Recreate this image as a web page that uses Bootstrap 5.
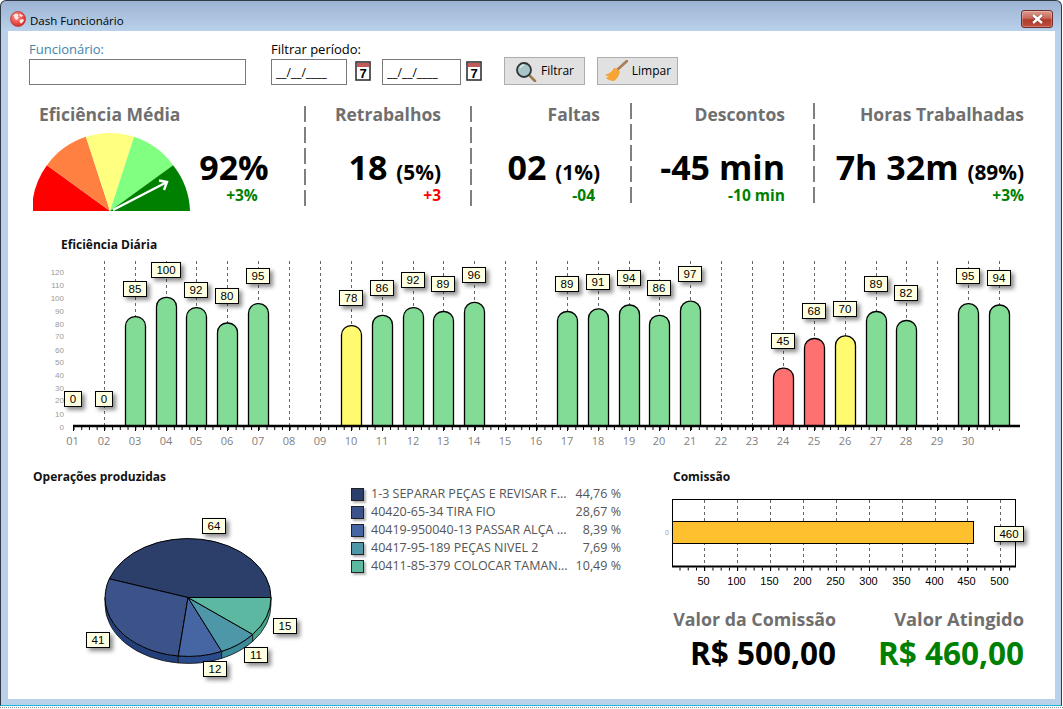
<!DOCTYPE html>
<html lang="pt-BR">
<head>
<meta charset="utf-8">
<title>Dash Funcionário</title>
<link rel="stylesheet" href="https://cdn.jsdelivr.net/npm/bootstrap@5.3.0/dist/css/bootstrap.min.css">
<style>
html,body{margin:0;height:709px;overflow:hidden;background:#fff;font-family:"Open Sans","Noto Sans",sans-serif;color:#000}
.janela{width:1062px;height:706px;border:1px solid #2f3a46;border-bottom-color:#19b6d6;border-radius:6px 6px 0 0;background:linear-gradient(#9cb4d2 0,#b9d1ea 30px);overflow:hidden}
.pontilhado{height:2px;margin-top:1px;border-top:1px dotted #8a8a8a}
.barra-titulo{height:30px;padding:9px 0 0 9px;font-size:11.5px}
.globo{width:16px;height:16px;margin-right:4px;margin-top:-3px}
.fechar{width:32px;height:18px;margin-right:8px;margin-top:-3px;border:1px solid #6f2f2a;border-radius:3px;background:linear-gradient(#dc9c90 0,#c8685a 45%,#ae3a2a 55%,#c05040 100%);box-shadow:inset 0 0 0 1px rgba(255,255,255,.25)}
.cliente{width:1047px;height:668px;margin-left:7px;background:#fff;overflow:hidden}
.filtros{height:69px;padding-left:21px}
.rotulo{font-size:13px;line-height:18px;padding-top:9px;height:27px}
.rotulo-azul{color:#3e83ad}
.campo.form-control{display:block;height:26px;margin-top:1px;padding:0 4px;border:1px solid #7a7a7a;border-radius:0;font-size:12px;line-height:24px;color:#000;box-shadow:none}
.campo-nome{width:217px}
.campo-data1{width:76px}
.campo-data2{width:79px;margin-left:11px}
.grupo-data{margin-left:25px}
.cal{width:16px;height:20px;margin-top:3px;margin-left:8px;flex:none}
.cal2{margin-left:5px}
.btn.botao{width:81px;height:28px;margin-top:26px;padding:0;border:1px solid #adadad;border-radius:0;background:#e1e1e1;font-size:12px;color:#000}
.botao-filtrar{margin-left:22px}
.botao-limpar{margin-left:12px}
.kpis{height:110px}
.celula{text-align:right}
.tit-kpi{font-size:17.5px;font-weight:700;line-height:28px;color:#6f6f6f;white-space:nowrap}
.val-kpi{font-size:34px;font-weight:700;line-height:40px;height:40px;margin-top:19px;white-space:nowrap}
.val-kpi small{font-size:20.800px;font-weight:700}
.delta{font-size:15.500px;font-weight:700;line-height:16px}
.recuo{padding-right:5px}
.verde{color:#008000}
.vermelho{color:#f00}
.divisor{width:2px;height:100px;flex:none;background:repeating-linear-gradient(#7f7f7f 0 16px,transparent 16px 21px)}
.div-baixo{margin-top:6px}
.div-alto{margin-top:3px}
.c1{width:296px}.c2{width:164px;padding-right:29px}.c3{width:158px;padding-right:30px}.c4{width:181px;padding-right:28px}.c5{width:240px;padding-right:31px}
.tit-ef{padding-left:31px;text-align:left}
.medidor{width:158px;height:81px;margin:3px 0 0 25px;display:block;flex:none}
.box-92{margin-left:8px;width:70px;text-align:center;margin-top:19px}
.box-92 .val-kpi{margin-top:0}
.box-92 .delta{padding-left:16px}
.secao{font-size:12px;font-weight:700;line-height:18px;color:#111;white-space:nowrap}
.diaria{margin-top:26px}
.diaria .secao{padding-left:53px}
.svg-dia{display:block;width:1047px;height:200px}
.inferior{margin-top:14px}
.col-pizza{width:335px}
.col-pizza .secao{padding-left:25px}
.svg-pizza{display:block;width:335px;height:204px}
.legenda{width:270px;margin-left:8px;padding-top:17px;flex:none}
.leg-linha{height:18px;font-size:12.500px;line-height:18px;color:#555}
.amostra{width:13px;height:13px;margin-right:7px;border:1px solid #222;box-shadow:2px 2px 2px rgba(0,0,0,.3);flex:none}
.leg-nome{white-space:nowrap;overflow:hidden}
.col-com{width:395px;margin-left:39px}
.col-com .secao{padding-left:13px}
.svg-com{display:block;width:395px;height:106px}
.stat{margin-top:13px;text-align:right}
.s1{width:176px}.s2{width:188px}
.tit-stat{font-size:18px;font-weight:700;line-height:28px;color:#6f6f6f;white-space:nowrap}
.s1 .tit-stat{font-size:17.800px}
.s2 .tit-stat{font-size:18.300px}
.val-stat{font-size:31.500px;font-weight:700;line-height:40px;white-space:nowrap}
svg text{font-family:"Liberation Sans",Arial,sans-serif}
.cx{fill:#ffffe1;stroke:#000;stroke-width:1;filter:drop-shadow(3px 3px 2px rgba(0,0,0,.45))}
.et text{font-size:11.5px;text-anchor:middle;fill:#000}
.ey{font-size:8px;fill:#9a9a9a;text-anchor:end}
.ex text{font-family:"Open Sans",sans-serif;font-size:11px;fill:#7f7f7f;text-anchor:middle}
.barras rect{stroke:#000;stroke-width:1.3}
.g{fill:#82dc96}.a{fill:#fffa6e}.r{fill:#ff7070}
.fatia path{stroke:#000;stroke-width:1;stroke-linejoin:round}
.lado path{stroke:#111;stroke-width:.8}
.ec text{font-size:11px;fill:#000;text-anchor:middle}
</style>
</head>
<body>
<div class="janela">
  <div class="barra-titulo d-flex align-items-center">
    <svg class="globo" viewBox="0 0 16 16"><defs><radialGradient id="gg" cx=".4" cy=".35" r=".7"><stop offset="0" stop-color="#ff9a90"/><stop offset="1" stop-color="#d81e1e"/></radialGradient></defs><circle cx="8" cy="8" r="7.6" fill="url(#gg)" stroke="#b93030" stroke-width=".6"/><path d="M3 4.5l3-2 2.5 1-1 2 1.5 1-2 2.5-2-1-.5-2zM9.5 2.5l3.5 2-1.5 1.5-2-1zM9.5 9l3.5-1 1 1.5-2.5 3-1.5-.5z" fill="#ffe9e5"/></svg>
    <span class="flex-grow-1">Dash Funcionário</span>
    <div class="fechar d-flex align-items-center justify-content-center"><svg width="13" height="10" viewBox="0 0 13 10"><path d="M1.5 1l10 8M11.500 1l-10 8" stroke="#5a1e18" stroke-width="3.600" opacity=".45"/><path d="M2 1l9 8M11 1l-9 8" stroke="#fff" stroke-width="2.400"/></svg></div>
  </div>
  <div class="cliente">
    <div class="filtros d-flex">
      <div>
        <div class="rotulo rotulo-azul">Funcionário:</div>
        <input class="form-control campo campo-nome" type="text" aria-label="Funcionário">
      </div>
      <div class="grupo-data">
        <div class="rotulo">Filtrar período:</div>
        <div class="d-flex">
          <input class="form-control campo campo-data1" type="text" value="__/__/____" aria-label="Data inicial">
          <svg class="cal" viewBox="0 0 16 20"><rect x="1" y="1" width="14" height="18" fill="#fff" stroke="#333" stroke-width="1.6"/><rect x="2" y="2" width="12" height="4" fill="#c25a5a"/><text x="8" y="17" font-size="13" font-weight="700" text-anchor="middle">7</text></svg>
          <input class="form-control campo campo-data2" type="text" value="__/__/____" aria-label="Data final">
          <svg class="cal cal2" viewBox="0 0 16 20"><rect x="1" y="1" width="14" height="18" fill="#fff" stroke="#333" stroke-width="1.6"/><rect x="2" y="2" width="12" height="4" fill="#c25a5a"/><text x="8" y="17" font-size="13" font-weight="700" text-anchor="middle">7</text></svg>
        </div>
      </div>
      <button class="btn botao botao-filtrar d-flex align-items-center justify-content-center gap-1" type="button">
        <svg width="22" height="21" viewBox="0 0 22 21"><path d="M14 14l6 6" stroke="#a07a4c" stroke-width="2.600" stroke-linecap="round"/><circle cx="9" cy="9" r="7" fill="#a9c4c8" stroke="#2c3438" stroke-width="1.800"/><path d="M5 7a4.500 4.500 0 0 1 4-3" stroke="#e3eef0" stroke-width="1.300" fill="none"/></svg>
        <span>Filtrar</span>
      </button>
      <button class="btn botao botao-limpar d-flex align-items-center justify-content-center gap-1" type="button">
        <svg width="24" height="22" viewBox="0 0 24 22"><path d="M23 1L13 10" stroke="#a97f55" stroke-width="2.800" stroke-linecap="round"/><path d="M10 8c2 0 5 2 6 4-1 4-3 7-6 9-3 0-6-1-8-3 1-1 2-1 3-2-1 0-3 0-4-1 3-1 7-3 9-7z" fill="#f6a534"/></svg>
        <span>Limpar</span>
      </button>
    </div>

    <div class="kpis d-flex">
      <div class="c1">
        <div class="tit-kpi tit-ef">Eficiência Média</div>
        <div class="d-flex">
          <svg class="medidor" viewBox="33 131 158 81">
            <path d="M110 211H32A78 78 0 0 1 46.900 165.200Z" fill="#f00"/>
            <path d="M110 211L46.900 165.200A78 78 0 0 1 85.900 136.800Z" fill="#ff8040"/>
            <path d="M110 211L85.900 136.800A78 78 0 0 1 134.100 136.800Z" fill="#ffff80"/>
            <path d="M110 211L134.100 136.800A78 78 0 0 1 173.100 165.200Z" fill="#80ff80"/>
            <path d="M110 211L173.100 165.200A78 78 0 0 1 190 211Z" fill="#008000"/>
            <path d="M113 210L167 182M159 180.500L167 182L164 190" stroke="#fff" stroke-width="2.400" fill="none"/>
          </svg>
          <div class="box-92"><div class="val-kpi">92%</div><div class="delta verde">+3%</div></div>
        </div>
      </div>
      <div class="divisor div-baixo"></div>
      <div class="celula c2"><div class="tit-kpi">Retrabalhos</div><div class="val-kpi">18 <small>(5%)</small></div><div class="delta vermelho">+3</div></div>
      <div class="divisor div-baixo"></div>
      <div class="celula c3"><div class="tit-kpi">Faltas</div><div class="val-kpi">02 <small>(1%)</small></div><div class="delta verde recuo">-04</div></div>
      <div class="divisor div-alto"></div>
      <div class="celula c4"><div class="tit-kpi">Descontos</div><div class="val-kpi">-45 min</div><div class="delta verde">-10 min</div></div>
      <div class="divisor div-alto"></div>
      <div class="celula c5"><div class="tit-kpi">Horas Trabalhadas</div><div class="val-kpi">7h 32m <small>(89%)</small></div><div class="delta verde">+3%</div></div>
    </div>

    <div class="diaria">
      <div class="secao">Eficiência Diária</div>
      <svg class="svg-dia" viewBox="8 254 1047 200">
        <defs>
          <clipPath id="acima"><rect x="60" y="254" width="980" height="172"/></clipPath>
          <rect id="b1" class="cx" x="-8.500" y="-7.500" width="17" height="15"/>
          <rect id="b2" class="cx" x="-11.500" y="-7.500" width="23" height="15"/>
          <rect id="b3" class="cx" x="-14.500" y="-7.500" width="29" height="15"/>
        </defs>
        <path d="M104.500 261V431M135.500 261V431M166.500 261V431M196.500 261V431M227.500 261V431M258.500 261V431M289.500 261V431M320.500 261V431M351.500 261V431M382.500 261V431M413.500 261V431M443.500 261V431M474.500 261V431M505.500 261V431M536.500 261V431M567.500 261V431M598.500 261V431M629.500 261V431M659.500 261V431M690.500 261V431M721.500 261V431M752.500 261V431M783.500 261V431M814.500 261V431M845.500 261V431M876.500 261V431M906.500 261V431M937.500 261V431M968.500 261V431M999.500 261V431" stroke="#666" stroke-width="1" stroke-dasharray="3 3" fill="none"/>
        <g class="ey">
          <text x="64" y="275">120</text><text x="64" y="287.500">110</text><text x="64" y="300.500">100</text><text x="64" y="313.500">90</text><text x="64" y="326.500">80</text><text x="64" y="339">70</text><text x="64" y="352.500">60</text><text x="64" y="365">50</text><text x="64" y="378">40</text><text x="64" y="390.500">30</text><text x="64" y="403">20</text><text x="64" y="416.500">10</text><text x="64" y="429.500">0</text>
        </g>
        <g class="barras" clip-path="url(#acima)">
          <rect class="g" x="125.500" y="316.600" width="20" height="124" rx="9.500"/>
          <rect class="g" x="156.500" y="297.300" width="20" height="143" rx="9.500"/>
          <rect class="g" x="186.500" y="307.600" width="20" height="133" rx="9.500"/>
          <rect class="g" x="217.500" y="323" width="20" height="117" rx="9.500"/>
          <rect class="g" x="248.500" y="303.700" width="20" height="137" rx="9.500"/>
          <rect class="a" x="341.500" y="325.600" width="20" height="115" rx="9.500"/>
          <rect class="g" x="372.500" y="315.300" width="20" height="125" rx="9.500"/>
          <rect class="g" x="403.500" y="307.600" width="20" height="133" rx="9.500"/>
          <rect class="g" x="433.500" y="311.500" width="20" height="129" rx="9.500"/>
          <rect class="g" x="464.500" y="302.400" width="20" height="138" rx="9.500"/>
          <rect class="g" x="557.500" y="311.500" width="20" height="129" rx="9.500"/>
          <rect class="g" x="588.500" y="308.900" width="20" height="132" rx="9.500"/>
          <rect class="g" x="619.500" y="305" width="20" height="135" rx="9.500"/>
          <rect class="g" x="649.500" y="315.300" width="20" height="125" rx="9.500"/>
          <rect class="g" x="680.500" y="301.200" width="20" height="139" rx="9.500"/>
          <rect class="r" x="773.500" y="368.100" width="20" height="72" rx="9.500"/>
          <rect class="r" x="804.500" y="338.500" width="20" height="102" rx="9.500"/>
          <rect class="a" x="835.500" y="335.900" width="20" height="105" rx="9.500"/>
          <rect class="g" x="866.500" y="311.500" width="20" height="129" rx="9.500"/>
          <rect class="g" x="896.500" y="320.500" width="20" height="120" rx="9.500"/>
          <rect class="g" x="958.500" y="303.700" width="20" height="137" rx="9.500"/>
          <rect class="g" x="989.500" y="305" width="20" height="135" rx="9.500"/>
        </g>
        <line x1="73" y1="426" x2="1020" y2="426" stroke="#000" stroke-width="2.500"/>
        <line x1="73.500" y1="428.500" x2="1000" y2="428.500" stroke="#000" stroke-width="3" stroke-dasharray="1 6.720"/>
        <path d="M73.500 426V431M104.500 426V431M135.500 426V431M166.500 426V431M196.500 426V431M227.500 426V431M258.500 426V431M289.500 426V431M320.500 426V431M351.500 426V431M382.500 426V431M413.500 426V431M443.500 426V431M474.500 426V431M505.500 426V431M536.500 426V431M567.500 426V431M598.500 426V431M629.500 426V431M659.500 426V431M690.500 426V431M721.500 426V431M752.500 426V431M783.500 426V431M814.500 426V431M845.500 426V431M876.500 426V431M906.500 426V431M937.500 426V431M968.500 426V431" stroke="#000" stroke-width="1"/>
        <g class="ex">
          <text x="72.500" y="445">01</text><text x="104" y="445">02</text><text x="135" y="445">03</text><text x="166" y="445">04</text><text x="196" y="445">05</text><text x="227" y="445">06</text><text x="258" y="445">07</text><text x="289" y="445">08</text><text x="320" y="445">09</text><text x="351" y="445">10</text><text x="382" y="445">11</text><text x="413" y="445">12</text><text x="443" y="445">13</text><text x="474" y="445">14</text><text x="505" y="445">15</text><text x="536" y="445">16</text><text x="567" y="445">17</text><text x="598" y="445">18</text><text x="629" y="445">19</text><text x="659" y="445">20</text><text x="690" y="445">21</text><text x="721" y="445">22</text><text x="752" y="445">23</text><text x="783" y="445">24</text><text x="814" y="445">25</text><text x="845" y="445">26</text><text x="876" y="445">27</text><text x="906" y="445">28</text><text x="937" y="445">29</text><text x="968" y="445">30</text>
        </g>
        <g class="et">
          <g transform="translate(73 399)"><use href="#b1"/><text y="4">0</text></g>
          <g transform="translate(104 399)"><use href="#b1"/><text y="4">0</text></g>
          <g transform="translate(135 289)"><use href="#b2"/><text y="4">85</text></g>
          <g transform="translate(166 270)"><use href="#b3"/><text y="4">100</text></g>
          <g transform="translate(196 290)"><use href="#b2"/><text y="4">92</text></g>
          <g transform="translate(227 296)"><use href="#b2"/><text y="4">80</text></g>
          <g transform="translate(258 276)"><use href="#b2"/><text y="4">95</text></g>
          <g transform="translate(351 298)"><use href="#b2"/><text y="4">78</text></g>
          <g transform="translate(382 288)"><use href="#b2"/><text y="4">86</text></g>
          <g transform="translate(413 280)"><use href="#b2"/><text y="4">92</text></g>
          <g transform="translate(443 284)"><use href="#b2"/><text y="4">89</text></g>
          <g transform="translate(474 275)"><use href="#b2"/><text y="4">96</text></g>
          <g transform="translate(567 284)"><use href="#b2"/><text y="4">89</text></g>
          <g transform="translate(598 282)"><use href="#b2"/><text y="4">91</text></g>
          <g transform="translate(629 278)"><use href="#b2"/><text y="4">94</text></g>
          <g transform="translate(659 288)"><use href="#b2"/><text y="4">86</text></g>
          <g transform="translate(690 274)"><use href="#b2"/><text y="4">97</text></g>
          <g transform="translate(783 341)"><use href="#b2"/><text y="4">45</text></g>
          <g transform="translate(814 311)"><use href="#b2"/><text y="4">68</text></g>
          <g transform="translate(845 309)"><use href="#b2"/><text y="4">70</text></g>
          <g transform="translate(876 284)"><use href="#b2"/><text y="4">89</text></g>
          <g transform="translate(906 293)"><use href="#b2"/><text y="4">82</text></g>
          <g transform="translate(968 276)"><use href="#b2"/><text y="4">95</text></g>
          <g transform="translate(999 278)"><use href="#b2"/><text y="4">94</text></g>
        </g>
      </svg>
    </div>

    <div class="inferior d-flex">
      <div class="col-pizza">
        <div class="secao">Operações produzidas</div>
        <svg class="svg-pizza" viewBox="8 486 335 204">
          <g class="lado">
            <path d="M105 597.500A83 59 0 0 0 178.300 656V663A83 59 0 0 1 105 604.500Z" fill="#24407c"/>
            <path d="M178.300 656A83 59 0 0 0 221.700 651.400V658.400A83 59 0 0 1 178.300 663Z" fill="#2b4c8c"/>
            <path d="M221.700 651.400A83 59 0 0 0 252.700 634.400V641.400A83 59 0 0 1 221.700 658.400Z" fill="#3b8a9a"/>
            <path d="M252.700 634.400A83 59 0 0 0 271 597.500V604.500A83 59 0 0 1 252.700 641.400Z" fill="#48a38c"/>
          </g>
          <g class="fatia">
            <path d="M188 597.500H271A83 59 0 0 0 109.300 578.800Z" fill="#2c3f6b"/>
            <path d="M188 597.500L109.300 578.800A83 59 0 0 0 178.300 656Z" fill="#3b5389"/>
            <path d="M188 597.500L178.300 656A83 59 0 0 0 221.700 651.400Z" fill="#4666a3"/>
            <path d="M188 597.500L221.700 651.400A83 59 0 0 0 252.700 634.400Z" fill="#4d97a8"/>
            <path d="M188 597.500L252.700 634.400A83 59 0 0 0 271 597.500Z" fill="#5cb8a0"/>
          </g>
          <g class="et">
            <g transform="translate(214 526)"><use href="#b2"/><text y="4">64</text></g>
            <g transform="translate(98 640)"><use href="#b2"/><text y="4">41</text></g>
            <g transform="translate(215 669)"><use href="#b2"/><text y="4">12</text></g>
            <g transform="translate(256 655)"><use href="#b2"/><text y="4">11</text></g>
            <g transform="translate(285 626)"><use href="#b2"/><text y="4">15</text></g>
          </g>
        </svg>
      </div>
      <div class="legenda">
        <div class="leg-linha d-flex align-items-center"><span class="amostra" style="background:#2c3f6b"></span><span class="leg-nome flex-grow-1">1-3 SEPARAR PEÇAS E REVISAR F...</span><span>44,76 %</span></div>
        <div class="leg-linha d-flex align-items-center"><span class="amostra" style="background:#3b5389"></span><span class="leg-nome flex-grow-1">40420-65-34 TIRA FIO</span><span>28,67 %</span></div>
        <div class="leg-linha d-flex align-items-center"><span class="amostra" style="background:#4666a3"></span><span class="leg-nome flex-grow-1">40419-950040-13 PASSAR ALÇA ...</span><span>8,39 %</span></div>
        <div class="leg-linha d-flex align-items-center"><span class="amostra" style="background:#4d97a8"></span><span class="leg-nome flex-grow-1">40417-95-189 PEÇAS NIVEL 2</span><span>7,69 %</span></div>
        <div class="leg-linha d-flex align-items-center"><span class="amostra" style="background:#5cb8a0"></span><span class="leg-nome flex-grow-1">40411-85-379 COLOCAR TAMAN...</span><span>10,49 %</span></div>
      </div>
      <div class="col-com">
        <div class="secao">Comissão</div>
        <svg class="svg-com" viewBox="660 486 395 106">
          <rect x="672.500" y="499.500" width="343" height="67" fill="#fff" stroke="#000"/>
          <path d="M704.500 500V571M737.500 500V571M770.500 500V571M803.500 500V571M836.500 500V571M869.500 500V571M902.500 500V571M935.500 500V571M967.500 500V571M1000.500 500V571" stroke="#666" stroke-dasharray="3 3" fill="none"/>
          <rect x="672.500" y="521.500" width="301" height="22" fill="#ffc02f" stroke="#000"/>
          <line x1="672" y1="566.500" x2="1016" y2="566.500" stroke="#000" stroke-width="2"/>
          <line x1="679.500" y1="569" x2="1012" y2="569" stroke="#000" stroke-width="3" stroke-dasharray="1 7.240"/>
          <path d="M704.500 566V571M737.500 566V571M770.500 566V571M803.500 566V571M836.500 566V571M869.500 566V571M902.500 566V571M935.500 566V571M967.500 566V571M1000.500 566V571" stroke="#000"/>
          <text x="667" y="535" font-size="7" fill="#9a9a9a" text-anchor="middle">0</text>
          <g class="ec">
            <text x="703.500" y="585">50</text><text x="736.500" y="585">100</text><text x="769.500" y="585">150</text><text x="802.500" y="585">200</text><text x="835.500" y="585">250</text><text x="868.500" y="585">300</text><text x="901.500" y="585">350</text><text x="934.500" y="585">400</text><text x="966.500" y="585">450</text><text x="999.500" y="585">500</text>
          </g>
          <g class="et"><g transform="translate(1009 534)"><use href="#b3"/><text y="4">460</text></g></g>
        </svg>
        <div class="d-flex">
          <div class="stat s1"><div class="tit-stat">Valor da Comissão</div><div class="val-stat">R$ 500,00</div></div>
          <div class="stat s2"><div class="tit-stat">Valor Atingido</div><div class="val-stat verde">R$ 460,00</div></div>
        </div>
      </div>
    </div>
  </div>
</div>
<div class="pontilhado"></div>
<script src="https://cdn.jsdelivr.net/npm/bootstrap@5.3.0/dist/js/bootstrap.bundle.min.js"></script>
</body>
</html>
